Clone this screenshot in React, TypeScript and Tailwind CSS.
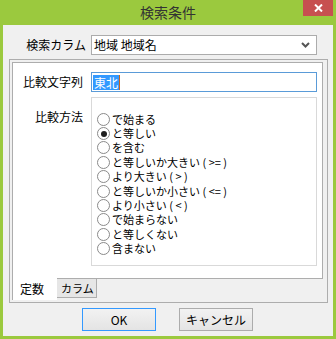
import React from "react";

const options = [
  "で始まる",
  "と等しい",
  "を含む",
  "と等しいか大きい ( >= )",
  "より大きい ( > )",
  "と等しいか小さい ( <= )",
  "より小さい ( < )",
  "で始まらない",
  "と等しくない",
  "含まない",
];

const font = { fontFamily: '"Noto Sans CJK JP", "Noto Sans", sans-serif' };

const Radio = ({ label, checked }: { label: string; checked?: boolean }) => (
  <div className="flex h-[14.4px] items-center">
    <span className="flex h-[13px] w-[13px] shrink-0 items-center justify-center rounded-full border border-[#8a8a8a] bg-white">
      {checked && <span className="h-[6px] w-[6px] rounded-full bg-[#1e1e1e]" />}
    </span>
    <span className="ml-[2px] whitespace-pre text-[11px] leading-[13px] text-black">{label}</span>
  </div>
);

const App = () => {
  return (
    <div className="flex h-[339px] w-[336px] flex-col bg-[#9bc93e]" style={font}>
      {/* Title bar */}
      <div className="grid h-[25px] grid-cols-[1fr_auto_1fr]">
        <div />
        <div className="flex items-center pb-[1px] text-[14px] text-[#333]">検索条件</div>
        <div className="flex justify-end pr-[3px]">
          <button className="flex h-[16px] w-[30px] items-center justify-center bg-[#c75050]">
            <svg width="9" height="8" viewBox="0 0 9 8">
              <path d="M1 0.5 L8 7.5 M8 0.5 L1 7.5" stroke="white" strokeWidth="2" />
            </svg>
          </button>
        </div>
      </div>

      {/* Client area */}
      <div className="mx-[3px] mb-[3px] flex flex-1 flex-col bg-[#f0f0f0]">
        <div className="mt-[10px] flex items-center">
          <div className="w-[83px] text-right text-[12px] text-black">検索カラム</div>
          <div className="ml-[5px] flex h-[20px] w-[226px] items-center justify-between border border-[#acacac] bg-white pl-[2px] pr-[6px]">
            <span className="text-[12px] leading-none text-black">地域 地域名</span>
            <svg width="9" height="6" viewBox="0 0 9 6">
              <path d="M1 1 L4.5 4.5 L8 1" stroke="#555" strokeWidth="2" fill="none" />
            </svg>
          </div>
        </div>

        {/* Tab control */}
        <div className="ml-[6px] mt-[4px] flex h-[244px] w-[319px] flex-col border border-[#adadad] pb-[2px] pl-[2px] pr-[4px] pt-[2px]">
          <div className="flex h-[217px] flex-col border border-[#adadad] bg-white">
            <div className="mt-[9px] flex items-center">
              <div className="w-[70px] text-right text-[12px] text-black">比較文字列</div>
              <div className="ml-[8px] flex h-[20px] w-[226px] items-center border border-[#5a9bd8] bg-white pl-[1px]">
                <span className="bg-[#3399ff] px-[1px] text-[12px] leading-[15px] text-white">東北</span>
                <span className="h-[15px] w-[1px] bg-[#c8641e]" />
              </div>
            </div>
            <div className="mt-[5px] flex items-start">
              <div className="mt-[11px] w-[70px] text-right text-[12px] text-black">比較方法</div>
              <div className="ml-[8px] flex h-[169px] w-[226px] flex-col border border-[#d9d9d9] bg-white pl-[5px] pt-[14px]">
                {options.map((o, i) => (
                  <Radio key={o} label={o} checked={i === 1} />
                ))}
              </div>
            </div>
          </div>
          <div className="flex">
            <div className="-mt-[1px] flex h-[22px] w-[45px] items-center border-l border-[#adadad] bg-white pl-[7px] text-[12px] text-black">
              定数
            </div>
            <div className="flex h-[19px] w-[40px] items-center whitespace-nowrap border-b border-r border-[#adadad] bg-[#e6e6e6] pl-[4px] text-[11px] leading-none text-black">
              カラム
            </div>
          </div>
        </div>

        {/* Buttons */}
        <div className="mt-[5px] flex justify-center gap-[23px] pr-[1px]">
          <button className="h-[23px] w-[74px] border border-[#3399ff] bg-gradient-to-b from-[#f2f2f2] to-[#e4e4e4] text-[12px] text-black">
            OK
          </button>
          <button className="h-[23px] w-[74px] border border-[#acacac] bg-gradient-to-b from-[#f2f2f2] to-[#e4e4e4] text-[12px] text-black">
            キャンセル
          </button>
        </div>
      </div>
    </div>
  );
};

export default App;
